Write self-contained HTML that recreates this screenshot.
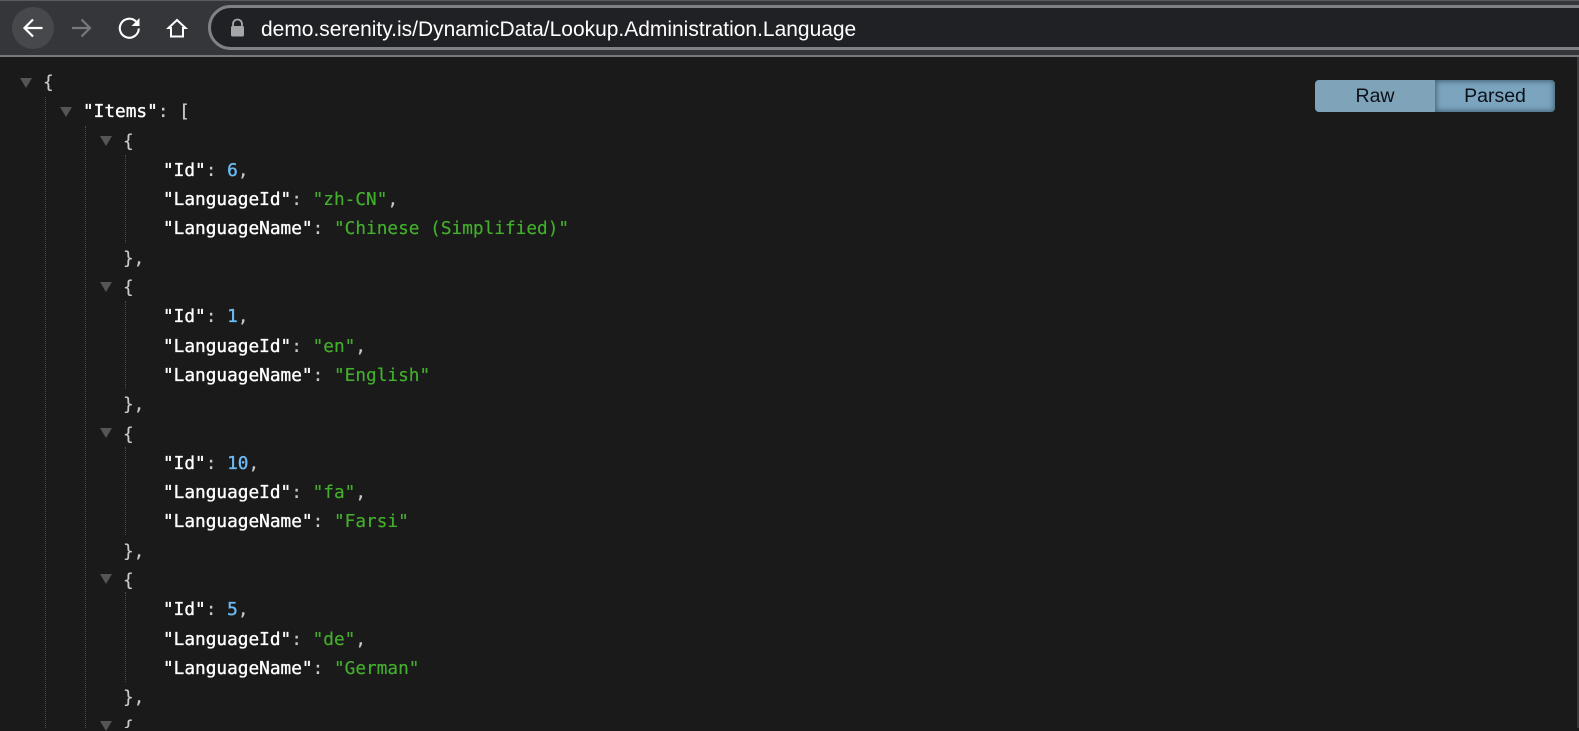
<!DOCTYPE html>
<html><head><meta charset="utf-8"><style>
html,body{margin:0;padding:0;width:1579px;height:728px;overflow:hidden;background:#1a1a1a}
#bar{position:absolute;left:0;top:0;width:1579px;height:55px;background:#35363a;border-top:1px solid #5a5b5e;box-sizing:border-box}
#line{position:absolute;left:0;top:55px;width:1579px;height:2px;background:#77797c}
#edge{position:absolute;left:1577px;top:57px;width:2px;height:671px;background:#3a3b3d}
#clip{position:absolute;left:208px;top:0;width:1371px;height:56px;overflow:hidden}
#omni{position:absolute;left:0;top:5px;width:1500px;height:45px;box-sizing:border-box;border:3px solid #7f8184;border-radius:23px;background:#202124}
#url{position:absolute;left:261px;top:16px;font:20.97px/28px "Liberation Sans",sans-serif;color:#fff;white-space:nowrap}
#code{position:absolute;left:0;top:69px;width:1300px;height:659px;overflow:hidden;font:17.75px/29.3px "DejaVu Sans Mono","Liberation Mono",monospace;color:#c8c8c8;text-shadow:0 0 .4px #c8c8c8}
#code div{height:29.3px;white-space:pre}
.l0{padding-left:43px}.l1{padding-left:83px}.l2{padding-left:123px}.l3{padding-left:163px}
b{font-weight:normal;color:#fff;-webkit-text-stroke:.35px #fff;text-shadow:none}
i{font-style:normal;color:#43ad2c;text-shadow:0 0 .4px #43ad2c}
u{text-decoration:none;color:#6cbcf5;-webkit-text-stroke:.35px #6cbcf5;text-shadow:none}
.a{position:absolute;width:0;height:0;border-left:6px solid transparent;border-right:6px solid transparent;border-top:10px solid #555}
.d{position:absolute;width:0;border-left:1px dotted #4a4a4a}
#sw{position:absolute;left:1315px;top:80px;width:240px;height:32px;border-radius:4px;overflow:hidden;font:19.5px/32px "Liberation Sans",sans-serif;color:#0c1118;text-align:center}
#sw div{position:absolute;top:0;height:32px;width:120px}
</style></head><body>
<div id="bar"></div><div id="line"></div><div id="edge"></div>
<svg style="position:absolute;left:0;top:0" width="210" height="56" viewBox="0 0 210 56">
<circle cx="33" cy="28" r="21" fill="#47484c"/>
<path d="M42.5 28H25M33 19.500L24.500 28L33 36.500" fill="none" stroke="#fff" stroke-width="2.200"/>
<path d="M72 28H89.500M81.500 19.500L90 28L81.500 36.500" fill="none" stroke="#77787b" stroke-width="2.200"/>
<path d="M136 21.500A9.500 9.500 0 1 0 138.800 28.500" fill="none" stroke="#fff" stroke-width="2.100"/>
<path d="M139.500 18V26H131.500Z" fill="#fff"/>
<path d="M177 20L168.500 28H171V36.500H183V28H185.500Z" fill="none" stroke="#fff" stroke-width="2"/>
</svg>
<div id="clip"><div id="omni"></div></div>
<svg style="position:absolute;left:228px;top:18px" width="20" height="22" viewBox="0 0 20 22">
<path d="M5 8V6A4.500 4.500 0 0 1 14 6V8" fill="none" stroke="#a5a6a8" stroke-width="1.800"/>
<rect x="3" y="8" width="13" height="10.500" rx="1.500" fill="#a5a6a8"/>
</svg>
<div id="url">demo.serenity.is/DynamicData/Lookup.Administration.Language</div>
<div class="d" style="left:45px;top:97px;height:631px"></div>
<div class="d" style="left:85px;top:126px;height:602px"></div>
<div class="d" style="left:125px;top:155px;height:88px"></div>
<div class="d" style="left:125px;top:301px;height:88px"></div>
<div class="d" style="left:125px;top:447px;height:88px"></div>
<div class="d" style="left:125px;top:592px;height:90px"></div>
<div class="a" style="left:20px;top:78px"></div>
<div class="a" style="left:60px;top:107px"></div>
<div class="a" style="left:100px;top:136px"></div>
<div class="a" style="left:100px;top:282px"></div>
<div class="a" style="left:100px;top:428px"></div>
<div class="a" style="left:100px;top:574px"></div>
<div class="a" style="left:100px;top:721px"></div>
<div id="code"><div class="l0">{</div><div class="l1"><b>"Items"</b>: [</div><div class="l2">{</div><div class="l3"><b>"Id"</b>: <u>6</u>,</div><div class="l3"><b>"LanguageId"</b>: <i>"zh-CN"</i>,</div><div class="l3"><b>"LanguageName"</b>: <i>"Chinese (Simplified)"</i></div><div class="l2">},</div><div class="l2">{</div><div class="l3"><b>"Id"</b>: <u>1</u>,</div><div class="l3"><b>"LanguageId"</b>: <i>"en"</i>,</div><div class="l3"><b>"LanguageName"</b>: <i>"English"</i></div><div class="l2">},</div><div class="l2">{</div><div class="l3"><b>"Id"</b>: <u>10</u>,</div><div class="l3"><b>"LanguageId"</b>: <i>"fa"</i>,</div><div class="l3"><b>"LanguageName"</b>: <i>"Farsi"</i></div><div class="l2">},</div><div class="l2">{</div><div class="l3"><b>"Id"</b>: <u>5</u>,</div><div class="l3"><b>"LanguageId"</b>: <i>"de"</i>,</div><div class="l3"><b>"LanguageName"</b>: <i>"German"</i></div><div class="l2">},</div><div class="l2">{</div></div>
<div id="sw">
<div style="left:0;background:#7fa3b9">Raw</div>
<div style="left:120px;background:#7ba4bf;box-shadow:inset 0 0 6px 1px #3f5c70">Parsed</div>
</div>
</body></html>
